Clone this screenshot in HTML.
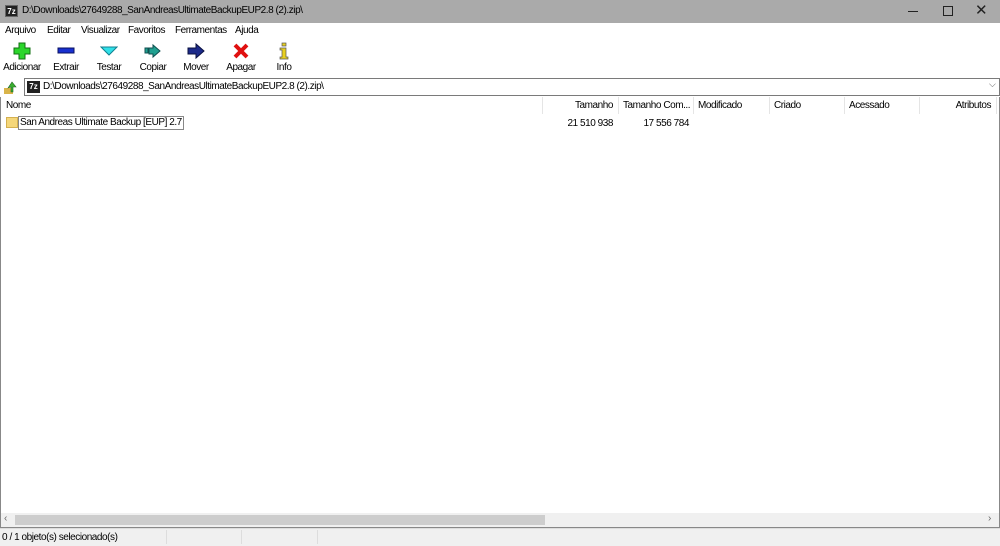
<!DOCTYPE html>
<html><head><style>
*{margin:0;padding:0;box-sizing:border-box}
body{width:1000px;height:546px;overflow:hidden;background:#fff;font-family:"Liberation Sans",sans-serif;font-size:10px;letter-spacing:-0.45px;color:#000;position:relative}
.abs{position:absolute}
#title{left:0;top:0;width:1000px;height:23px;background:#aaaaaa}
#menu{left:0;top:23px;width:1000px;height:16px;background:#fff}
#menu span{position:absolute;top:2px}
.tb{position:absolute;top:42px;width:50px;text-align:center}
.tb svg{display:block;margin:0 auto 2px}
#addr{left:24px;top:78px;width:976px;height:18px;background:#fff;border:1px solid #7a7a7a}
#list{left:0;top:97px;width:1000px;height:416px;background:#fff;border-left:1px solid #888;border-right:1px solid #888}
.h{position:absolute;top:3px}
.sep{position:absolute;top:0;width:1px;height:17px;background:#e5e5e5}
</style></head><body>
<div id="title" class="abs">
 <div class="abs" style="left:5px;top:5px;width:13px;height:12px;background:#222;color:#fff;font-size:8px;font-weight:bold;line-height:12px;text-align:center;border:1px solid #666;letter-spacing:0">7z</div>
 <div class="abs" style="left:22px;top:5px">D:\Downloads\27649288_SanAndreasUltimateBackupEUP2.8 (2).zip\</div>
 <div class="abs" style="left:908px;top:11px;width:10px;height:1px;background:#222"></div>
 <div class="abs" style="left:943px;top:6px;width:10px;height:10px;border:1px solid #222"></div>
 <div class="abs" style="left:975px;top:1px;font-size:15px;color:#222">✕</div>
</div>
<div id="menu" class="abs">
 <span style="left:5px">Arquivo</span><span style="left:47px">Editar</span><span style="left:81px">Visualizar</span><span style="left:128px">Favoritos</span><span style="left:175px">Ferramentas</span><span style="left:235px">Ajuda</span>
</div>
<div class="tb" style="left:-3px"><svg width="18" height="18"><path d="M6 1h6v5h5v6h-5v5H6v-5H1V6h5z" fill="#2bd62b" stroke="#107010"/></svg>Adicionar</div>
<div class="tb" style="left:41px"><svg width="18" height="18"><rect x="1" y="6" width="16" height="5" fill="#1830d0" stroke="#0a1060"/></svg>Extrair</div>
<div class="tb" style="left:84px"><svg width="18" height="18"><path d="M1 5h16l-8 8z" fill="#30e0e8" stroke="#108090"/></svg>Testar</div>
<div class="tb" style="left:128px"><svg width="18" height="18"><path d="M1 6h3v5H1zM5 6h4V3l7 6-7 6v-3H5z" fill="#20a090" stroke="#105050"/></svg>Copiar</div>
<div class="tb" style="left:171px"><svg width="18" height="18"><path d="M1 6h8V2l8 7-8 7v-4H1z" fill="#1c2a8a" stroke="#0a1040"/></svg>Mover</div>
<div class="tb" style="left:216px"><svg width="18" height="18"><path d="M3 3l12 12M15 3L3 15" stroke="#e01010" stroke-width="4"/></svg>Apagar</div>
<div class="tb" style="left:259px"><svg width="18" height="18"><rect x="7" y="1" width="4" height="3" fill="#e8d020" stroke="#555" stroke-width=".7"/><path d="M5 6h6v9h2v2H5v-2h2V8H5z" fill="#e8d020" stroke="#555" stroke-width=".7"/></svg>Info</div>
<svg class="abs" style="left:3px;top:80px" width="16" height="15"><path d="M1 8h9v6H1z" fill="#d9b44a"/><path d="M5 8l4-6 4 5h-3v5H8V7z" fill="#3ab030" stroke="#206020" stroke-width=".6"/></svg>
<div id="addr" class="abs">
 <div class="abs" style="left:2px;top:2px;width:13px;height:12px;background:#222;color:#fff;font-size:8px;font-weight:bold;line-height:12px;text-align:center;letter-spacing:0">7z</div>
 <div class="abs" style="left:18px;top:2px">D:\Downloads\27649288_SanAndreasUltimateBackupEUP2.8 (2).zip\</div>
 <div class="abs" style="left:964px;top:0px;font-size:9px;color:#555">⌵</div>
</div>
<div id="list" class="abs">
 <div class="sep" style="left:541px"></div><div class="sep" style="left:617px"></div><div class="sep" style="left:692px"></div><div class="sep" style="left:768px"></div><div class="sep" style="left:843px"></div><div class="sep" style="left:918px"></div><div class="sep" style="left:995px"></div>
 <span class="h" style="left:5px">Nome</span>
 <span class="h" style="right:386px">Tamanho</span>
 <span class="h" style="left:622px">Tamanho Com...</span>
 <span class="h" style="left:697px">Modificado</span>
 <span class="h" style="left:773px">Criado</span>
 <span class="h" style="left:848px">Acessado</span>
 <span class="h" style="right:8px">Atributos</span>
 <div class="abs" style="left:5px;top:20px;width:12px;height:11px;background:#f5d77a;border:1px solid #d4b050"></div>
 <div class="abs" style="left:17px;top:19px;border:1px solid #888;padding:0 1px;height:14px;line-height:12px">San Andreas Ultimate Backup [EUP] 2.7</div>
 <span class="abs" style="right:386px;top:21px">21 510 938</span>
 <span class="abs" style="right:310px;top:21px">17 556 784</span>
</div>
<div class="abs" style="left:0;top:513px;width:1000px;height:15px;background:#f0f0f0;border:1px solid #888;border-top:none"></div>
<div class="abs" style="left:15px;top:515px;width:530px;height:10px;background:#cdcdcd"></div>
<div class="abs" style="left:4px;top:513px;font-size:10px;color:#666">‹</div>
<div class="abs" style="left:988px;top:513px;font-size:10px;color:#666">›</div>
<div class="abs" style="left:0;top:528px;width:1000px;height:18px;background:#f0f0f0;border-top:1px solid #ddd"></div>
<div class="abs" style="left:166px;top:530px;width:1px;height:14px;background:#ddd"></div>
<div class="abs" style="left:241px;top:530px;width:1px;height:14px;background:#ddd"></div>
<div class="abs" style="left:317px;top:530px;width:1px;height:14px;background:#ddd"></div>
<div class="abs" style="left:2px;top:532px;font-size:10px">0 / 1 objeto(s) selecionado(s)</div>
</body></html>
